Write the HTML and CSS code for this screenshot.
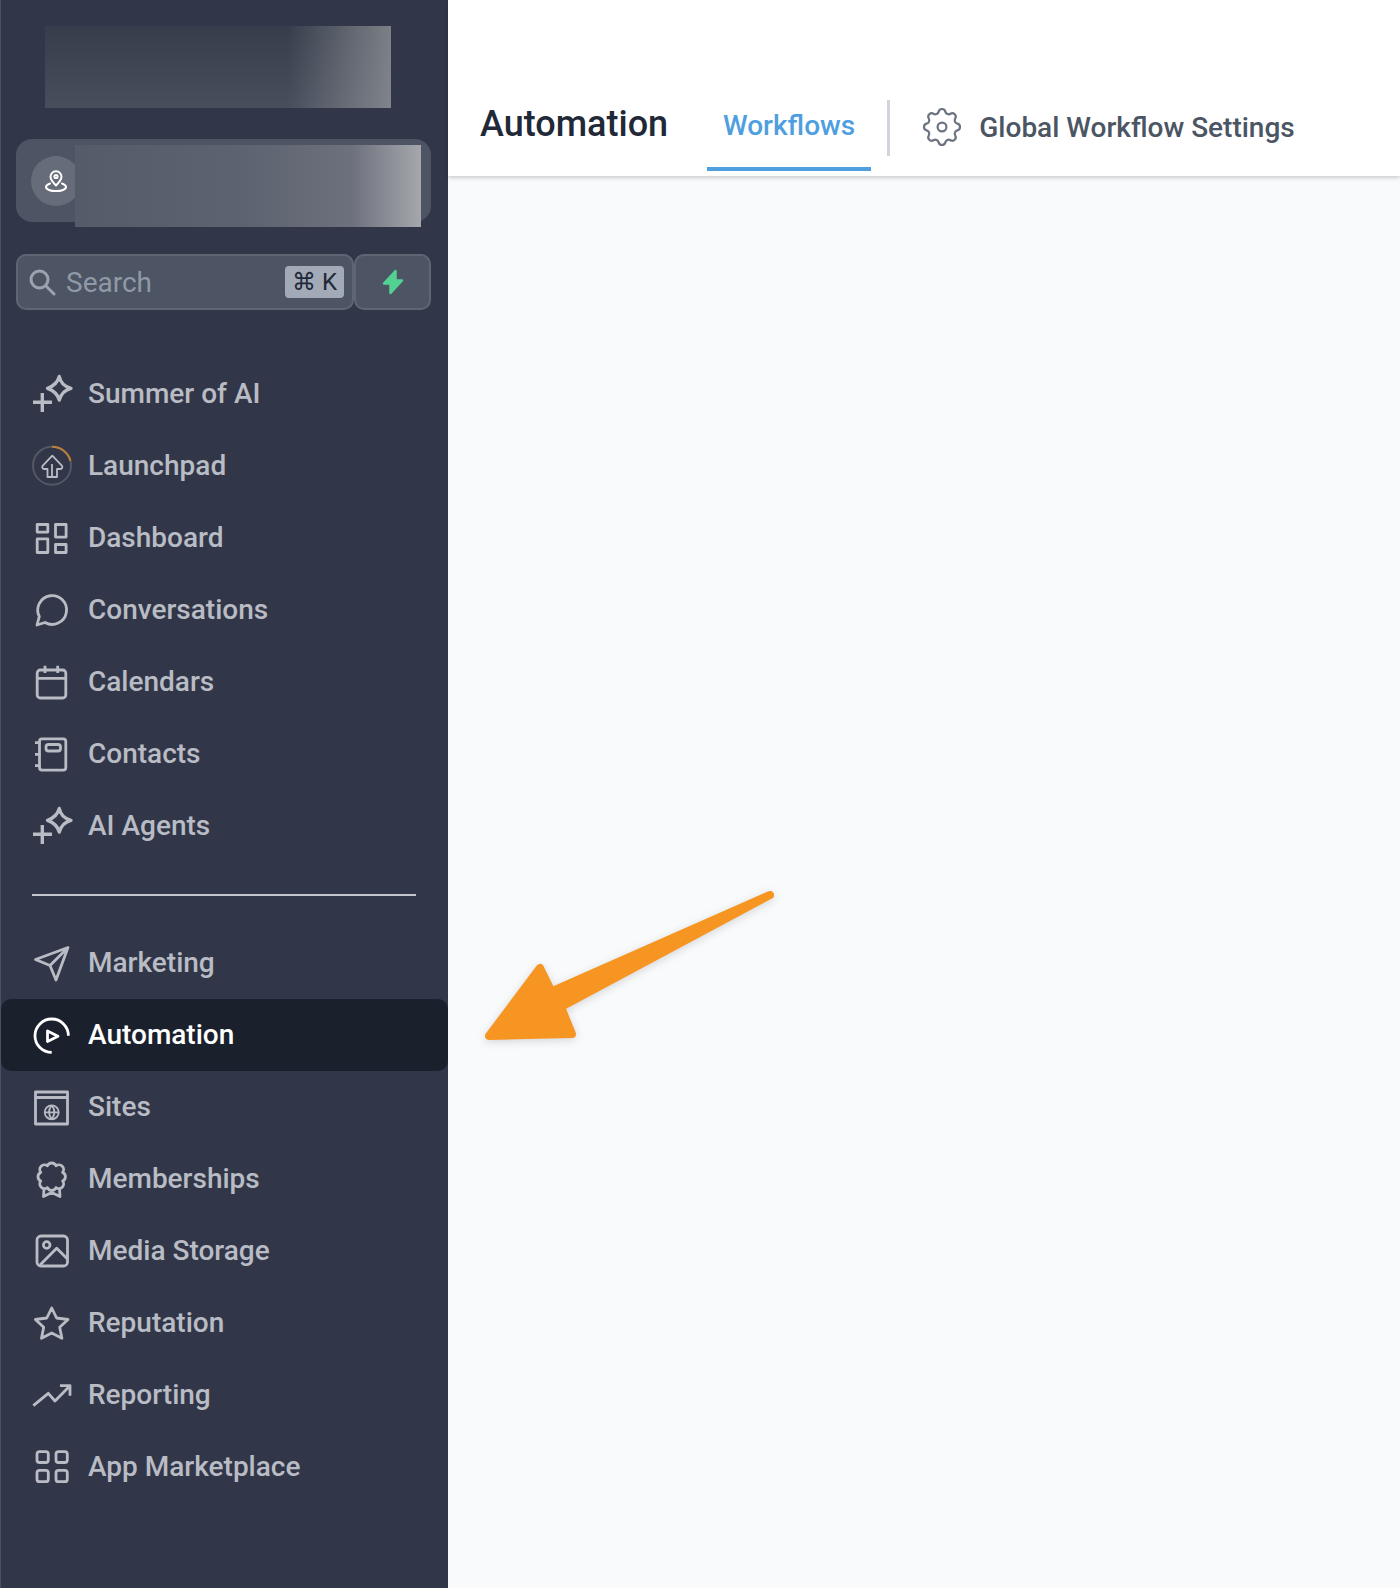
FILE: index.html
```html
<!DOCTYPE html>
<html lang="en">
<head>
    <meta charset="UTF-8">
    <meta name="viewport" content="width=device-width, initial-scale=1.0">
    <title>Automation</title>
    <link rel="stylesheet" href="styles.css">
</head>
<body>
    <div class="app">
        <aside class="sidebar">
            <div class="logo-blur"></div>
            <div class="location">
                <div class="location-icon">
                    <svg width="26" height="26" viewBox="0 0 26 26" fill="none" stroke="#fff" stroke-width="2" stroke-linejoin="round" stroke-linecap="round">
                        <path d="M13 17.500c-3-3-5.500-5.400-5.500-8.700a5.500 5.500 0 0 1 11 0c0 3.300-2.500 5.700-5.500 8.700z"/>
                        <circle cx="13" cy="8.500" r="1.600"/>
                        <path d="M7 15.500c-2.200.8-4 2-4 3.600 0 2.300 4.500 4 10 4s10-1.700 10-4c0-1.600-1.800-2.800-4-3.600"/>
                    </svg>
                </div>
                <div class="location-blur"></div>
            </div>
            <div class="search-row">
                <div class="search">
                    <svg class="search-icon" width="28" height="28" viewBox="0 0 28 28" fill="none" stroke="#9ca3af" stroke-width="3" stroke-linecap="round">
                        <circle cx="11.500" cy="11.500" r="8.500"/>
                        <path d="M18 18l8 8"/>
                    </svg>
                    <span class="search-text">Search</span>
                    <span class="kbd">⌘ K</span>
                </div>
                <div class="bolt">
                    <svg width="24" height="26" viewBox="0 0 24 26" fill="#52d193">
                        <path d="M14.500 2L3 14.500h6.500L9.500 24 21 11.500h-6.500z" stroke="#52d193" stroke-width="2.500" stroke-linejoin="round"/>
                    </svg>
                </div>
            </div>

            <nav class="nav-top">
                <a class="nav-item">
                    <svg class="nav-icon bold" viewBox="0 0 44 44">
                        <path d="M29.300 5.500C30.500 12 34 15.500 41 17.300 34 19 31 23 29.300 29 27.500 23 24 19.500 17.500 17.300 24 15 27.500 12 29.300 5.500z"/>
                        <path d="M12.300 22v19M3 31.300h19"/>
                    </svg>
                    <span>Summer of AI</span>
                </a>
                <a class="nav-item">
                    <svg class="nav-icon" viewBox="0 0 44 44">
                        <circle cx="22" cy="22.700" r="19" class="ring"/>
                        <path d="M22 3.700A19 19 0 0 1 40.500 18" class="ring-done"/>
                        <path class="thin" d="M17.500 34V26h-3.200a2 2 0 0 1-1.500-3.400l9.500-9.900 9.500 9.900a2 2 0 0 1-1.500 3.400H27v8zM22 21v13"/>
                    </svg>
                    <span>Launchpad</span>
                </a>
                <a class="nav-item">
                    <svg class="nav-icon" viewBox="0 0 44 44">
                        <rect x="7.200" y="9.500" width="10.600" height="7.600"/>
                        <rect x="25.500" y="9.500" width="10.600" height="12.600"/>
                        <rect x="7.200" y="23.900" width="10.600" height="13.600"/>
                        <rect x="25.500" y="29.500" width="10.600" height="8"/>
                    </svg>
                    <span>Dashboard</span>
                </a>
                <a class="nav-item">
                    <svg class="nav-icon" viewBox="0 0 44 44">
                        <path d="M7 38l2.300-8.500A14.400 14.400 0 1 1 15 35.500z"/>
                    </svg>
                    <span>Conversations</span>
                </a>
                <a class="nav-item">
                    <svg class="nav-icon" viewBox="0 0 44 44">
                        <rect x="7.200" y="11" width="28.600" height="28" rx="3"/>
                        <path d="M15 6.700v7.300M27.700 6.700v7.300M7.200 19.300h28.600"/>
                    </svg>
                    <span>Calendars</span>
                </a>
                <a class="nav-item">
                    <svg class="nav-icon" viewBox="0 0 44 44">
                        <rect x="9.500" y="7.900" width="26.300" height="31.200" rx="2.500"/>
                        <rect x="16" y="13.500" width="14.500" height="6.500" rx="2.500"/>
                        <path d="M5 11.700h5.500M5 23.300h5.500M5 34.700h5.500"/>
                    </svg>
                    <span>Contacts</span>
                </a>
                <a class="nav-item">
                    <svg class="nav-icon bold" viewBox="0 0 44 44">
                        <path d="M29.300 5.500C30.500 12 34 15.500 41 17.300 34 19 31 23 29.300 29 27.500 23 24 19.500 17.500 17.300 24 15 27.500 12 29.300 5.500z"/>
                        <path d="M12.300 22v19M3 31.300h19"/>
                    </svg>
                    <span>AI Agents</span>
                </a>
            </nav>

            <div class="nav-divider"></div>

            <nav class="nav-bottom">
                <a class="nav-item">
                    <svg class="nav-icon" viewBox="0 0 44 44">
                        <path d="M38 6.500L5.500 18.500 20 24.500 26 39zM20 24.500L38 6.500"/>
                    </svg>
                    <span>Marketing</span>
                </a>
                <a class="nav-item active">
                    <svg class="nav-icon" viewBox="0 0 44 44">
                        <path d="M38.400 22.700A16.700 16.700 0 1 0 21.700 39.400"/>
                        <path d="M17.500 18v10.500l10.500-5.200z"/>
                    </svg>
                    <span>Automation</span>
                </a>
                <a class="nav-item">
                    <svg class="nav-icon" viewBox="0 0 44 44">
                        <rect x="5.500" y="7" width="32" height="32"/>
                        <path d="M5.500 12.500h32"/>
                        <circle cx="21.700" cy="27.300" r="7" class="thin"/>
                        <path class="thin" d="M14.700 27.300h14M21.700 20.300c-3.500 4.500-3.500 9.500 0 14M21.700 20.300c3.500 4.500 3.500 9.500 0 14"/>
                    </svg>
                    <span>Sites</span>
                </a>
                <a class="nav-item">
                    <svg class="nav-icon" viewBox="0 0 44 44">
                        <path d="M26 8.800A4.700 4.700 0 0 1 32.600 15.400 4.700 4.700 0 0 1 32.600 24 4.700 4.700 0 0 1 26 30.600 4.700 4.700 0 0 1 17.400 30.600 4.700 4.700 0 0 1 10.800 24 4.700 4.700 0 0 1 10.800 15.400 4.700 4.700 0 0 1 17.400 8.800 4.700 4.700 0 0 1 26 8.800z"/>
                        <path d="M14 32l-.5 7.500 8.200-4 8.300 4-.5-7.500"/>
                    </svg>
                    <span>Memberships</span>
                </a>
                <a class="nav-item">
                    <svg class="nav-icon" viewBox="0 0 44 44">
                        <rect x="7" y="7" width="30.500" height="30" rx="4"/>
                        <circle cx="16.700" cy="16" r="3.300"/>
                        <path d="M10 36l16.700-16.700 11 11"/>
                    </svg>
                    <span>Media Storage</span>
                </a>
                <a class="nav-item">
                    <svg class="nav-icon" viewBox="0 0 44 44">
                        <path d="M21.700 7L26.600 17 38 18.500 29.700 26.300 31.900 37.300 21.700 32 11.500 37.300 13.700 26.300 5.400 18.500 16.800 17z"/>
                    </svg>
                    <span>Reputation</span>
                </a>
                <a class="nav-item">
                    <svg class="nav-icon" viewBox="0 0 44 44">
                        <path d="M3.300 32.700l15-12.400 6.700 7.700 15-15.300M30 12.700h10v10"/>
                    </svg>
                    <span>Reporting</span>
                </a>
                <a class="nav-item">
                    <svg class="nav-icon" viewBox="0 0 44 44">
                        <rect x="7" y="6.700" width="11.300" height="10.800" rx="2.500"/>
                        <rect x="26" y="6.700" width="11.300" height="10.800" rx="2.500"/>
                        <rect x="7" y="25.300" width="11.300" height="11.400" rx="2.500"/>
                        <rect x="26" y="25.300" width="11.300" height="11.400" rx="2.500"/>
                    </svg>
                    <span>App Marketplace</span>
                </a>
            </nav>
        </aside>

        <div class="content">
            <header class="topbar">
                <h1>Automation</h1>
                <a class="tab tab-active">Workflows</a>
                <div class="tab-divider"></div>
                <a class="tab-settings">
                    <svg width="48" height="48" viewBox="0 0 24 24" fill="none" stroke="#6b7280" stroke-width="1.100" stroke-linecap="round" stroke-linejoin="round">
                        <path d="M10.325 4.317c.426-1.756 2.924-1.756 3.350 0a1.724 1.724 0 0 0 2.573 1.066c1.543-.94 3.310.826 2.370 2.370a1.724 1.724 0 0 0 1.065 2.572c1.756.426 1.756 2.924 0 3.350a1.724 1.724 0 0 0-1.066 2.573c.94 1.543-.826 3.310-2.370 2.370a1.724 1.724 0 0 0-2.572 1.065c-.426 1.756-2.924 1.756-3.350 0a1.724 1.724 0 0 0-2.573-1.066c-1.543.94-3.310-.826-2.370-2.370a1.724 1.724 0 0 0-1.065-2.572c-1.756-.426-1.756-2.924 0-3.350a1.724 1.724 0 0 0 1.066-2.573c-.94-1.543.826-3.310 2.370-2.370.996.608 2.296.07 2.572-1.065z"/>
                        <circle cx="12" cy="12" r="2.200"/>
                    </svg>
                    <span>Global Workflow Settings</span>
                </a>
            </header>
            <main class="main-area"></main>
            <svg class="arrow" width="300" height="170" viewBox="480 880 300 170">
                <path d="M770 895L551.500 991.500 540 968 489 1036 572 1034 561 1007z"/>
            </svg>
        </div>
    </div>
</body>
</html>
```

FILE: styles.css
```css
* {
    box-sizing: border-box;
}
body {
    margin: 0;
    font-family: Roboto, "Liberation Sans", sans-serif;
    background-color: #f9fafb;
}
.app {
    display: flex;
    width: 1400px;
    height: 1588px;
    overflow: hidden;
}

/* sidebar */
.sidebar {
    position: relative;
    width: 448px;
    flex-shrink: 0;
    padding-top: 26px;
    background-color: #313748;
    border-left: 1px solid #4a5060;
}
.logo-blur {
    width: 346px;
    height: 82px;
    margin-left: 44px;
    background:
        linear-gradient(90deg, rgba(150,152,156,0) 70%, rgba(150,152,156,0.72) 100%),
        linear-gradient(180deg, #363e4c 0%, #474e5c 100%);
}
.location {
    position: relative;
    display: flex;
    align-items: center;
    width: 415px;
    height: 83px;
    margin: 31px 0 0 15px;
    padding-left: 15px;
    background-color: #4d5463;
    border-radius: 16px;
}
.location-icon {
    display: flex;
    align-items: center;
    justify-content: center;
    width: 50px;
    height: 50px;
    background-color: #666c79;
    border-radius: 50%;
}
.location-blur {
    position: absolute;
    top: 6px;
    left: 59px;
    width: 346px;
    height: 82px;
    background: linear-gradient(90deg, #555c69 0%, #5d6370 50%, #6d717d 80%, #a5a7ac 100%);
}
.search-row {
    display: flex;
    height: 56px;
    margin: 32px 0 0 15px;
}
.search {
    display: flex;
    align-items: center;
    width: 338px;
    padding: 0 8px 0 10px;
    background-color: #4d5463;
    border: 2px solid #5e6573;
    border-radius: 10px;
}
.search-icon {
    flex-shrink: 0;
}
.search-text {
    flex: 1;
    margin-left: 10px;
    font-size: 28px;
    color: #9099a6;
}
.kbd {
    width: 59px;
    height: 32px;
    line-height: 32px;
    text-align: center;
    font-size: 24px;
    font-family: Roboto, "DejaVu Sans", sans-serif;
    color: #1f2937;
    background-color: #a3aab7;
    border-radius: 4px;
}
.bolt {
    display: flex;
    align-items: center;
    justify-content: center;
    width: 77px;
    background-color: #4d5463;
    border: 2px solid #5e6573;
    border-radius: 10px;
}

/* nav */
.nav-top {
    margin-top: 47px;
}
.nav-divider {
    width: 384px;
    height: 2px;
    margin: 33px 0 0 31px;
    background-color: #c3c6cc;
}
.nav-bottom {
    margin-top: 31px;
}
.nav-bottom span {
    margin-bottom: 2px;
}
.nav-item {
    display: flex;
    align-items: center;
    gap: 14px;
    height: 72px;
    padding-left: 29px;
    font-size: 28px;
    font-weight: 500;
    color: #b9bcc4;
    border-radius: 10px;
}
.nav-item.active {
    color: #fff;
    background-color: #1b202d;
}
.nav-icon {
    width: 44px;
    height: 44px;
    flex-shrink: 0;
    fill: none;
    stroke: #b9bcc4;
    stroke-width: 2.800;
    stroke-linejoin: round;
}
.nav-icon.bold {
    stroke-width: 3.400;
}
.nav-item.active .nav-icon {
    stroke: #fff;
}
.nav-icon .thin {
    stroke-width: 1.800;
}
.nav-icon .ring {
    stroke: #525864;
    stroke-width: 2;
}
.nav-icon .ring-done {
    stroke: #c07f36;
    stroke-width: 2;
}

/* top bar */
.content {
    position: relative;
    flex: 1;
    display: flex;
    flex-direction: column;
}
.topbar {
    position: relative;
    z-index: 1;
    display: flex;
    align-items: flex-start;
    height: 176px;
    padding-left: 32px;
    background-color: #fff;
    box-shadow: 0 2px 4px rgba(0,0,0,0.18);
}
.topbar h1 {
    margin: 99px 0 0;
    width: 227px;
    line-height: 50px;
    font-size: 36px;
    font-weight: 500;
    color: #1f2937;
}
.tab {
    height: 171px;
    padding: 106px 16px 0;
    line-height: 40px;
    font-size: 28px;
    font-weight: 500;
}
.tab-active {
    color: #4f9fe0;
    border-bottom: 4px solid #4f9fe0;
}
.tab-divider {
    width: 3px;
    height: 56px;
    margin: 100px 0 0 16px;
    background-color: #d1d5db;
}
.tab-settings {
    display: flex;
    align-items: center;
    gap: 13px;
    margin: 103px 0 0 28px;
    font-size: 28px;
    font-weight: 500;
    color: #4b5563;
}
.main-area {
    flex: 1;
    background-color: #f9fafb;
}
.arrow {
    position: absolute;
    top: 880px;
    left: 32px;
    fill: #f69521;
    stroke: #f69521;
    stroke-width: 8;
    stroke-linejoin: round;
    filter: drop-shadow(0 2px 4px rgba(0,0,0,0.15));
}
```
